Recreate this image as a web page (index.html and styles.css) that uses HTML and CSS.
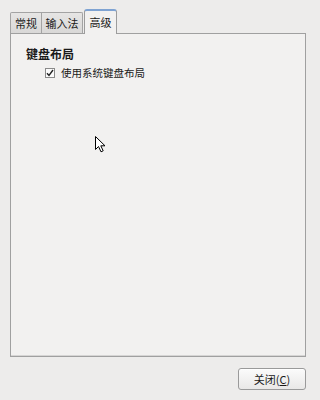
FILE: index.html
```html
<!DOCTYPE html>
<html lang="zh">
<head>
<meta charset="utf-8">
<title>设置</title>
<link rel="stylesheet" href="styles.css">
</head>
<body>
<div class="window">
  <div class="tabs">
    <div class="tab tab-first">常规</div>
    <div class="tab tab-second">输入法</div>
    <div class="tab tab-active">高级</div>
  </div>
  <div class="panel">
    <div class="heading">键盘布局</div>
    <label class="check-row">
      <span class="checkbox">
        <svg width="8" height="8" viewBox="0 0 8 8"><path d="M1 4.2 L3 6.4 L7 1" fill="none" stroke="#222" stroke-width="1.4"/></svg>
      </span>
      <span class="check-label">使用系统键盘布局</span>
    </label>
  </div>
  <div class="actions">
    <button class="btn">关闭(<span class="mnemonic">C</span>)</button>
  </div>
  <svg class="cursor" width="13" height="17" viewBox="0 0 13 17">
    <path d="M0.5 0.5 L0.5 13.5 L3.5 10.5 L6 15.8 L8.2 14.8 L5.8 9.8 L10 9.8 Z" fill="#fff" stroke="#000" stroke-width="1"/>
  </svg>
</div>
</body>
</html>
```
FILE: styles.css
```css
html, body {
  margin: 0;
  padding: 0;
}
body {
  background: #edeceb;
  font-family: "Noto Sans CJK SC", "Noto Sans", sans-serif;
  font-size: 11px;
  color: #1a1a1a;
}
.window {
  position: relative;
  width: 316px;
  height: 400px;
  padding: 9px 10px 0 10px;
  box-sizing: border-box;
}
.tabs {
  display: flex;
  align-items: flex-end;
  height: 24px;
  position: relative;
  z-index: 1;
}
.tab {
  box-sizing: border-box;
  height: 21px;
  border: 1px solid #a3a3a3;
  border-bottom: none;
  background: linear-gradient(#e6e5e4, #d9d8d7);
  display: flex;
  align-items: center;
  justify-content: center;
  line-height: 1;
  padding-top: 1px;
}
.tab-first {
  width: 32px;
  border-radius: 2px 0 0 0;
}
.tab-second {
  width: 41px;
  border-left: none;
  border-radius: 0 2px 0 0;
}
.tab-active {
  width: 33px;
  height: 25px;
  margin-left: 1px;
  margin-bottom: -1px;
  background: #f2f1f0;
  border-color: #9c9c9c;
  border-top: 2px solid #7fa3d2;
  border-radius: 3px 3px 0 0;
  padding-top: 0;
}
.panel {
  box-sizing: border-box;
  height: 324px;
  border: 1px solid #a0a0a0;
  background: #f2f1f0;
  box-shadow: inset 0 -1px 0 #d6d5d4;
  padding: 12px 15px;
}
.heading {
  font-weight: bold;
  font-size: 12px;
  line-height: 16px;
}
.check-row {
  display: flex;
  align-items: center;
  margin-top: 2px;
  padding-left: 19px;
  height: 17px;
}
.checkbox {
  box-sizing: border-box;
  width: 10px;
  height: 10px;
  border: 1px solid #8a8a8a;
  background: #fbfbfb;
  display: flex;
  align-items: center;
  justify-content: center;
  margin-right: 6px;
}
.check-label {
  font-size: 10.5px;
  line-height: 14px;
}
.actions {
  display: flex;
  justify-content: flex-end;
  margin-top: 11px;
}
.btn {
  box-sizing: border-box;
  width: 68px;
  height: 22px;
  margin-right: 0;
  border: 1px solid #9a9a9a;
  border-radius: 3px;
  background: linear-gradient(#fbfbfb, #e9e8e7);
  box-shadow: inset 0 1px 0 #ffffff;
  font-family: "Noto Sans CJK SC", "Noto Sans", sans-serif;
  font-size: 11px;
  color: #1a1a1a;
  padding: 0;
  line-height: 1;
}
.mnemonic {
  text-decoration: underline;
}
.cursor {
  position: absolute;
  left: 95px;
  top: 136px;
}
```
